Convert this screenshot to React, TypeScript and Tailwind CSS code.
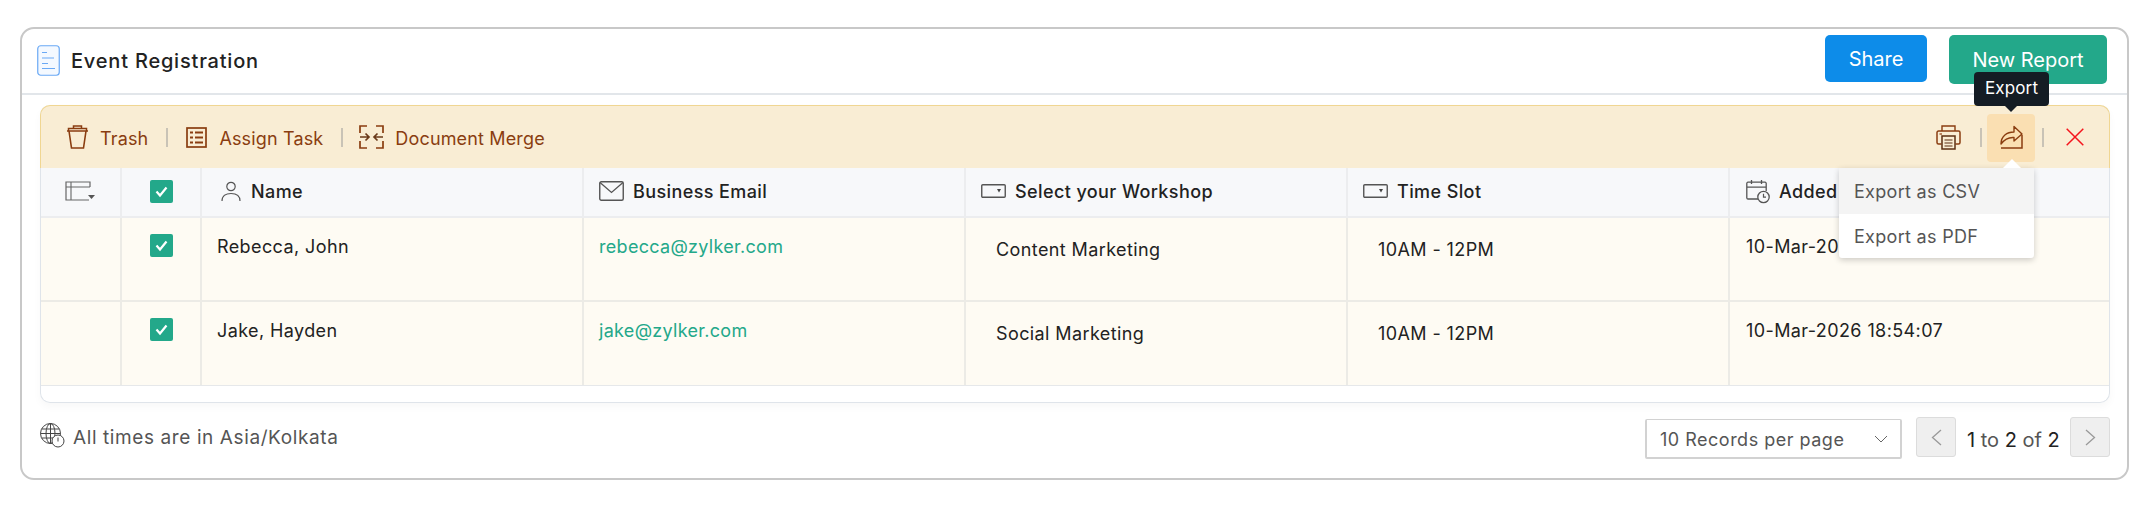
import React from "react";

const COLS = "grid grid-cols-[81px_80px_382px_382px_382px_382px_1fr]";
const BR = "#8a3d10";

function Check() {
  return (
    <span className="w-[23px] h-[23px] rounded-[2px] bg-[#23a88a] flex items-center justify-center">
      <svg width="15" height="15" viewBox="0 0 15 15" fill="none">
        <path d="M2.5 7.5 L6 11.5 L12.5 3.5" stroke="#fff" strokeWidth="2.2" />
      </svg>
    </span>
  );
}

function SelectIcon() {
  return (
    <svg width="25" height="14" viewBox="0 0 25 14" fill="none" className="shrink-0">
      <rect x="0.75" y="0.75" width="23.5" height="12.5" rx="1" stroke="#555" strokeWidth="1.4" />
      <path d="M16 5 L20 5 L18 8.5 Z" fill="#444" />
    </svg>
  );
}

function PersonIcon() {
  return (
    <svg width="20" height="21" viewBox="0 0 20 21" fill="none" className="shrink-0">
      <circle cx="10" cy="5.5" r="4.2" stroke="#555" strokeWidth="1.2" />
      <path d="M1 20 C1 14.5 5 12.5 10 12.5 C15 12.5 19 14.5 19 20" stroke="#555" strokeWidth="1.2" />
    </svg>
  );
}

function MailIcon() {
  return (
    <svg width="25" height="20" viewBox="0 0 25 20" fill="none" className="shrink-0">
      <rect x="0.75" y="0.75" width="23.5" height="18.5" rx="1.5" stroke="#555" strokeWidth="1.4" />
      <path d="M1 1.5 L12.5 11.5 L24 1.5" stroke="#555" strokeWidth="1.3" />
    </svg>
  );
}

function CalendarIcon() {
  return (
    <svg width="24" height="25" viewBox="0 0 24 25" fill="none" className="shrink-0">
      <path d="M12 20 H2 A1.2 1.2 0 0 1 0.8 19 V4.5 A1.2 1.2 0 0 1 2 3.2 H19 A1.2 1.2 0 0 1 20.2 4.5 V12" stroke="#555" strokeWidth="1.3" />
      <path d="M1 8.2 H20 M5.5 1 V5 M15.5 1 V5" stroke="#555" strokeWidth="1.3" />
      <circle cx="17.5" cy="18" r="5.7" fill="#f7f8fa" stroke="#555" strokeWidth="1.3" />
      <path d="M17.5 14.8 V18.2 H20" stroke="#555" strokeWidth="1.2" />
    </svg>
  );
}

function ColumnsIcon() {
  return (
    <svg width="30" height="20" viewBox="0 0 30 20" fill="none">
      <path d="M25 6 V1 H1 V19 H24" stroke="#666" strokeWidth="1.2" />
      <path d="M1 6 H25 M6 1 V19" stroke="#666" strokeWidth="1.1" />
      <path d="M23 14 H30 L26.5 18 Z" fill="#555" />
    </svg>
  );
}

function HeaderCell({ icon, label, x }: { icon: React.ReactNode; label: string; x: string }) {
  return (
    <div className={`flex items-center pb-[2px] border-r-2 border-[#ecedef] ${x}`}>
      {icon}
      <span className="text-[18px] tracking-[0.4px] font-medium text-[#222] whitespace-nowrap">{label}</span>
    </div>
  );
}

function Row({ name, email, workshop, date, bottom }: { name: string; email: string; workshop: string; date: string; bottom: string }) {
  const cell = "border-r-2 border-[#ecebe6]";
  return (
    <div className={`${COLS} h-[84px] bg-[#fefbf3] ${bottom} text-[18px] tracking-[0.4px] text-[#222]`}>
      <div className={cell} />
      <div className={`${cell} flex justify-center pt-[16px] pl-[1px]`}>
        <Check />
      </div>
      <div className={`${cell} pl-[15px] pt-[15px]`}>{name}</div>
      <div className={`${cell} pl-[15px] pt-[15px] tracking-[0.3px] text-[#23a88a]`}>{email}</div>
      <div className={`${cell} pl-[30px] pt-[18px]`}>{workshop}</div>
      <div className={`${cell} pl-[30px] pt-[18px]`}>10AM - 12PM</div>
      <div className="pl-[16px] pt-[15px]">{date}</div>
    </div>
  );
}

function Divider({ className }: { className: string }) {
  return <span className={`w-[2px] h-[19px] bg-[#c9c3b6] ${className}`} />;
}

export default function App() {
  return (
    <div className="bg-white min-h-[508px] pt-[27px] pl-[20px] font-[Inter,sans-serif]">
      <div className="relative w-[2109px] h-[453px] border-2 border-[#c8c8c8] rounded-[14px] bg-white">
        {/* Title bar */}
        <div className="h-[66px] border-b-2 border-[#e2e6ea] flex items-start pl-[15px] pr-[20px]">
          <svg width="23" height="31" viewBox="0 0 23 31" fill="none" className="mt-[16px] shrink-0">
            <rect x="0.75" y="0.75" width="21.5" height="29.5" rx="3" fill="#f4f9ff" stroke="#6aa9f5" strokeWidth="1.2" />
            <path d="M5 7.5 H10 M5 13 H17 M5 18.5 H11 M5 23.5 H18" stroke="#6aa9f5" strokeWidth="1.2" />
          </svg>
          <span className="ml-[11px] mt-[20px] text-[20px] tracking-[0.8px] font-medium leading-[24px] text-[#222]">Event Registration</span>
          <div className="ml-auto flex items-start gap-[22px] mt-[6px]">
            <button className="w-[102px] h-[47px] rounded-[5px] bg-[#0d8ce9] text-white text-[20px] pt-[1px]">Share</button>
            <button className="w-[158px] h-[49px] rounded-[5px] bg-[#23a88a] text-white text-[20px]">New Report</button>
          </div>
        </div>

        {/* Content */}
        <div className="ml-[18px] mr-[17px] mt-[10px] h-[298px] rounded-[10px] border border-[#dfe4ea] border-t-0 shadow-[0_4px_8px_rgba(0,0,0,0.03)]">
          <div className="h-[63px] -mx-px bg-[#f9edd4] border border-b-0 border-[#f0d692] rounded-t-[10px] flex items-center pl-[25px] pr-[25px] text-[18px] tracking-[0.15px] text-[#8a3d10]">
            <svg width="23" height="24" viewBox="0 0 23 24" fill="none" className="shrink-0">
              <path d="M1 6 H22 M3 6 L5.5 23 H17.5 L20 6" stroke={BR} strokeWidth="1.6" />
              <path d="M2.5 6 V3.5 H20.5 V6 M7.5 3.5 V1 H15.5 V3.5" stroke={BR} strokeWidth="1.5" />
            </svg>
            <span className="ml-[11px] pt-[2px]">Trash</span>
            <Divider className="ml-[18px]" />
            <svg width="21" height="21" viewBox="0 0 21 21" fill="none" className="ml-[18px] shrink-0">
              <rect x="1" y="1" width="19" height="19" stroke={BR} strokeWidth="1.7" />
              <path d="M4 5.5 H7 M9 5.5 H17 M4 10.5 H7 M9 10.5 H17 M4 15.5 H7 M9 15.5 H17" stroke={BR} strokeWidth="2" />
            </svg>
            <span className="ml-[12px] pt-[2px]">Assign Task</span>
            <Divider className="ml-[18px]" />
            <svg width="25" height="24" viewBox="0 0 25 24" fill="none" className="ml-[16px] shrink-0">
              <path d="M8 1 H1 V8 M17 1 H24 V8 M8 23 H1 V16 M17 23 H24 V16" stroke={BR} strokeWidth="1.7" />
              <path d="M1 12 H10 M6.5 8.5 L10 12 L6.5 15.5 M24 12 H15 M18.5 8.5 L15 12 L18.5 15.5" stroke="#6a3a1a" strokeWidth="1.7" />
            </svg>
            <span className="ml-[11px] pt-[2px]">Document Merge</span>

            <div className="ml-auto flex items-center">
              <svg width="25" height="25" viewBox="0 0 25 25" fill="none" className="shrink-0">
                <path d="M6 6 V1 H19 V6" stroke={BR} strokeWidth="1.4" />
                <path d="M5.5 19 H2.5 A1.5 1.5 0 0 1 1 17.5 V7.5 A1.5 1.5 0 0 1 2.5 6 H22.5 A1.5 1.5 0 0 1 24 7.5 V17.5 A1.5 1.5 0 0 1 22.5 19 H19.5" stroke={BR} strokeWidth="1.5" />
                <rect x="6" y="11" width="13" height="13" fill="#f9edd4" stroke="#5c2f12" strokeWidth="1.5" />
                <path d="M8.5 15 H16.5 M8.5 18 H16.5 M8.5 21 H16.5" stroke="#5c2f12" strokeWidth="1.2" />
                <path d="M3.5 9 H6" stroke={BR} strokeWidth="1.2" />
              </svg>
              <Divider className="ml-[19px]" />
              <div className="relative w-[48px] h-[48px] ml-[5px] mt-[2px] bg-[#fadfb2] rounded-[4px] flex items-center justify-center">
                <svg width="23" height="24" viewBox="0 0 23 24" fill="none" className="mb-[2px]">
                  <path d="M1 23 H22 V10" stroke={BR} strokeWidth="1.5" />
                  <path d="M1 19 C1 11 7 7 14 7 V1.5 L22 9 L14 16 V12.5 C8 12 4 15 1 19 Z" stroke={BR} strokeWidth="1.4" strokeLinejoin="round" />
                </svg>
                {/* Tooltip */}
                <div className="absolute left-[-13px] top-[-42px] w-[75px] h-[34px] rounded-[4px] bg-[#141c24] text-white text-[17px] flex items-center justify-center z-20">
                  Export
                  <span className="absolute left-[31px] bottom-[-6px] w-0 h-0 border-x-[6px] border-x-transparent border-t-[6px] border-t-[#141c24]" />
                </div>
                <span className="absolute left-[16px] bottom-[-6px] z-20 w-0 h-0 border-x-[9px] border-x-transparent border-b-[9px] border-b-white" />
                {/* Menu */}
                <div className="absolute right-[1px] top-[54px] w-[195px] h-[90px] bg-white rounded-b-[3px] shadow-[0_2px_6px_rgba(0,0,0,0.2)] text-[18px] tracking-[0.3px] text-[#555] z-10">
                  <div className="h-[46px] bg-[#f4f4f4] pl-[15px] flex items-center">Export as CSV</div>
                  <div className="h-[44px] pl-[15px] flex items-center">Export as PDF</div>
                </div>
              </div>
              <Divider className="ml-[7px]" />
              <svg width="18" height="18" viewBox="0 0 18 18" fill="none" className="ml-[22px] shrink-0">
                <path d="M0.7 0.7 L17.3 17.3 M17.3 0.7 L0.7 17.3" stroke="#f5141c" strokeWidth="1.5" />
              </svg>
            </div>
          </div>

          {/* Table */}
          <div className={`${COLS} h-[50px] bg-[#f7f8fa] border-b-2 border-[#ecedef]`}>
            <div className="border-r-2 border-[#ecedef] flex items-center pb-[2px] pl-[24px]"><ColumnsIcon /></div>
            <div className="border-r-2 border-[#ecedef] flex items-center justify-center pb-[2px] pl-[1px]"><Check /></div>
            <HeaderCell x="pl-[19px] gap-[10px]" icon={<PersonIcon />} label="Name" />
            <HeaderCell x="pl-[15px] gap-[9px]" icon={<MailIcon />} label="Business Email" />
            <HeaderCell x="pl-[15px] gap-[9px]" icon={<SelectIcon />} label="Select your Workshop" />
            <HeaderCell x="pl-[15px] gap-[9px]" icon={<SelectIcon />} label="Time Slot" />
            <div className="flex items-center gap-[9px] pb-[2px] pl-[16px]">
              <CalendarIcon />
              <span className="text-[18px] tracking-[0.4px] font-medium text-[#222] whitespace-nowrap">Added Time</span>
            </div>
          </div>
          <Row name="Rebecca, John" email="rebecca@zylker.com" workshop="Content Marketing" date="10-Mar-2026 18:54:07" bottom="border-b-2 border-[#ecebe6]" />
          <Row name="Jake, Hayden" email="jake@zylker.com" workshop="Social Marketing" date="10-Mar-2026 18:54:07" bottom="border-b border-[#e6e8ea]" />
        </div>

        {/* Footer */}
        <div className="ml-[18px] mr-[17px] mt-[14px] flex items-start">
          <svg width="25" height="25" viewBox="0 0 25 25" fill="none" className="mt-[6px] shrink-0">
            <circle cx="10.5" cy="10.5" r="10" stroke="#444" strokeWidth="1" />
            <ellipse cx="10.5" cy="10.5" rx="4.5" ry="10" stroke="#444" strokeWidth="1" />
            <path d="M10.5 0.5 V20.5 M1.5 6 H19.5 M0.5 10.5 H20.5 M1.5 15 H19.5" stroke="#444" strokeWidth="1" />
            <circle cx="18" cy="18" r="6" fill="#fff" stroke="#444" strokeWidth="1" />
            <path d="M18 14.5 V18.5" stroke="#444" strokeWidth="1" />
          </svg>
          <span className="ml-[8px] mt-[9px] text-[19px] tracking-[0.6px] leading-[24px] text-[#555]">All times are in Asia/Kolkata</span>
          <div className="ml-auto flex items-start">
            <div className="w-[257px] h-[40px] mt-[2px] border-2 border-[#d2d2d2] border-t rounded-[2px] bg-white flex items-center pl-[13px] pr-[12px] text-[18px] tracking-[0.5px] text-[#555]">
              <span className="pt-[1px]">10 Records per page</span>
              <svg width="14" height="8" viewBox="0 0 14 8" fill="none" className="ml-auto">
                <path d="M1 1 L7 7 L13 1" stroke="#666" strokeWidth="1" />
              </svg>
            </div>
            <button className="ml-[14px] w-[40px] h-[40px] rounded-[3px] bg-[#efefef] border border-[#dcdcdc] flex items-center justify-center">
              <svg width="11" height="17" viewBox="0 0 11 17" fill="none"><path d="M10 1 L1.5 8.5 L10 16" stroke="#999" strokeWidth="1.3" /></svg>
            </button>
            <span className="ml-[11px] w-[91px] mt-[9px] text-[20px] leading-[28px] text-[#555] whitespace-nowrap">
              <span className="text-[#222]">1</span> to <span className="text-[#222]">2</span> of <span className="text-[#222]">2</span>
            </span>
            <button className="ml-[12px] w-[40px] h-[40px] rounded-[3px] bg-[#efefef] border border-[#dcdcdc] flex items-center justify-center">
              <svg width="11" height="17" viewBox="0 0 11 17" fill="none"><path d="M1 1 L9.5 8.5 L1 16" stroke="#999" strokeWidth="1.3" /></svg>
            </button>
          </div>
        </div>
      </div>
    </div>
  );
}
